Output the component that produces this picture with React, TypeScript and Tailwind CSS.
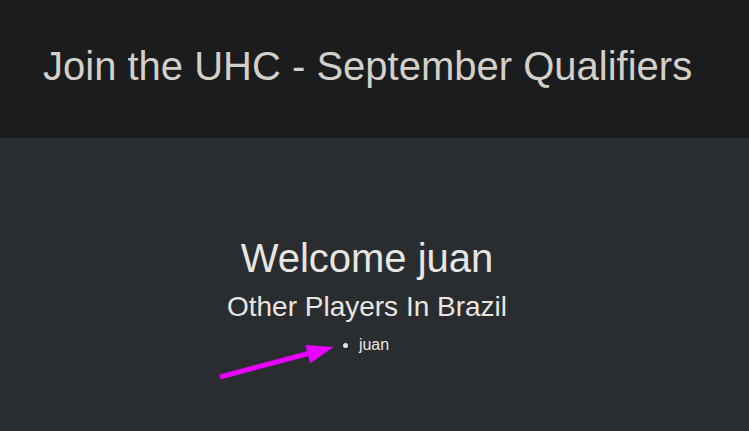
export default function App() {
  return (
    <div className="relative min-h-[431px] bg-[#2a2d30] font-['Liberation_Sans',Arial,sans-serif]">
      <header className="h-[138px] bg-[#1b1c1e] pl-[43px] pt-[43px]">
        <h1 className="text-[40px] leading-[46px] text-[#d3cfc9]">Join the UHC - September Qualifiers</h1>
      </header>

      <main className="flex flex-col items-center pr-[15px] pt-[97px] text-[#e8e6e3]">
        <h2 className="text-[40px] leading-[46px]">Welcome juan</h2>
        <h3 className="mt-[10px] text-[28px] leading-[32px]">Other Players In Brazil</h3>
        <ul className="mt-[13px] list-disc pl-[14px] text-[16px] leading-[18px]">
          <li>juan</li>
        </ul>
      </main>

      {/* annotation arrow */}
      <svg className="absolute left-0 top-0" width="749" height="431" viewBox="0 0 749 431">
        <line x1="220" y1="377" x2="314" y2="352" stroke="#e600ff" strokeWidth="5" />
        <polygon points="333.5,347 305.5,345 310,363.5" fill="#e600ff" />
      </svg>
    </div>
  );
}
